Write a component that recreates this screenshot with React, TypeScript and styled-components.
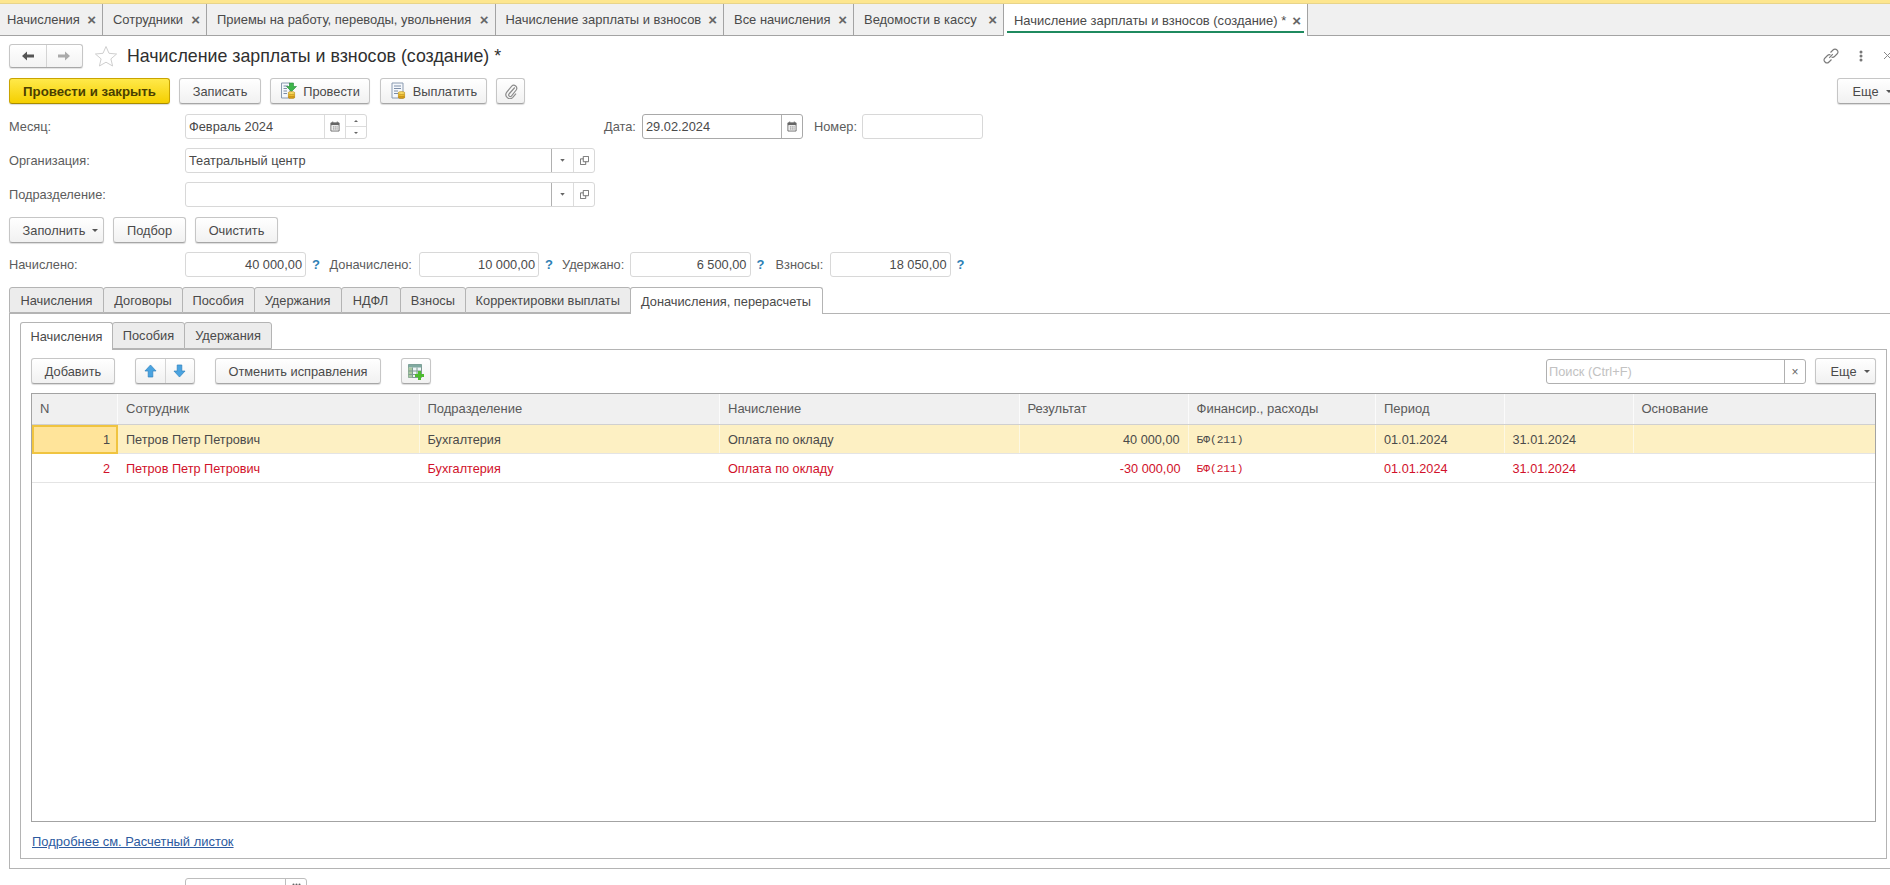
import React from "react";
import styled, { createGlobalStyle } from "styled-components";

const Global = createGlobalStyle`
  html, body { margin: 0; padding: 0; background: #fff; overflow: hidden; }
  body { font-family: "Liberation Sans", Arial, sans-serif; font-size: 12.8px; color: #4a4a4a; }
  #root { width: 1890px; height: 885px; overflow: hidden; }
`;

const Page = styled.div`
  width: 1907px;
  height: 885px;
  overflow: hidden;
  display: flex;
  flex-direction: column;
`;

const Stripe = styled.div`
  height: 4px;
  flex: none;
  background: #fde68f;
  border-bottom: 1px solid #e8d48a;
  box-sizing: border-box;
`;

const TabBar = styled.div`
  height: 32px;
  flex: none;
  box-sizing: border-box;
  display: flex;
  background: #f0f0f0;
  border-bottom: 1px solid #a3a3a3;
`;

const OpenTab = styled.div<{ $w: number; $active?: boolean; $first?: boolean }>`
  width: ${(p) => p.$w}px;
  flex: none;
  box-sizing: border-box;
  display: flex;
  align-items: center;
  justify-content: space-between;
  padding: 0 6px 0 ${(p) => (p.$first ? 7 : 10)}px;
  position: relative;
  white-space: nowrap;
  font-size: 12.95px;
  color: #4a4a4a;
  border-right: 1px solid #a3a3a3;
  background: ${(p) => (p.$active ? "#fff" : "transparent")};
  height: ${(p) => (p.$active ? "32px" : "31px")};
  ${(p) => p.$active && `
    &::after {
      content: "";
      position: absolute;
      left: 3px;
      right: 3px;
      bottom: 3px;
      height: 2px;
      background: #1f8a5f;
    }
  `}
`;

const CloseX = styled.span`
  font-size: 15px;
  font-weight: bold;
  color: #666;
  line-height: 1;
`;

const Body = styled.div`
  flex: 1;
  padding: 8px 9px 0;
  display: flex;
  flex-direction: column;
  min-height: 0;
`;

const TitleRow = styled.div`
  height: 24px;
  flex: none;
  display: flex;
  align-items: center;
`;

const NavGroup = styled.div`
  width: 74px;
  height: 24px;
  box-sizing: border-box;
  display: flex;
  border: 1px solid #c6c6c6;
  border-bottom-color: #a8a8a8;
  border-radius: 3px;
  background: linear-gradient(#fff, #f3f3f3);
  box-shadow: 0 1px 1px rgba(0, 0, 0, 0.12);
`;

const NavBtn = styled.div<{ $divider?: boolean }>`
  flex: 1;
  display: flex;
  align-items: center;
  justify-content: center;
  ${(p) => p.$divider && "border-right: 1px solid #d4d4d4;"}
`;

const StarWrap = styled.div`
  width: 24px;
  height: 22px;
  margin-left: 11px;
  flex: none;
`;

const Title = styled.div`
  margin-left: 9px;
  font-size: 17.8px;
  color: #2f2f2f;
  white-space: nowrap;
`;

const RightIcons = styled.div`
  margin-left: auto;
  display: flex;
  align-items: center;
  gap: 20px;
  margin-right: 5px;
`;

const ButtonRow = styled.div<{ $top: number }>`
  margin-top: ${(p) => p.$top}px;
  height: 26px;
  flex: none;
  display: flex;
  align-items: stretch;
`;

const Btn = styled.div<{ $w: number; $gap?: number; $primary?: boolean; $menu?: number; $push?: boolean }>`
  width: ${(p) => p.$w}px;
  margin-left: ${(p) => (p.$push ? "auto" : `${p.$gap ?? 0}px`)};
  padding-left: ${(p) => p.$menu ?? 0}px;
  flex: none;
  box-sizing: border-box;
  display: flex;
  align-items: center;
  justify-content: center;
  gap: ${(p) => (p.$menu ? 7 : 5)}px;
  white-space: nowrap;
  border-radius: 3px;
  border: 1px solid ${(p) => (p.$primary ? "#c9a400" : "#c6c6c6")};
  border-bottom-color: ${(p) => (p.$primary ? "#a88c00" : "#a6a6a6")};
  background: ${(p) =>
    p.$primary
      ? "linear-gradient(#ffe94a, #f5cf00)"
      : "linear-gradient(#ffffff, #f1f1f1)"};
  box-shadow: 0 1px 1px rgba(0, 0, 0, 0.14);
  color: ${(p) => (p.$primary ? "#4a3f00" : "#4a4a4a")};
  ${(p) => p.$primary && "font-weight: bold; font-size: 13.25px;"}
`;

const Caret = styled.span`
  width: 0;
  height: 0;
  border-left: 3px solid transparent;
  border-right: 3px solid transparent;
  border-top: 3px solid #555;
  flex: none;
`;

const FieldRow = styled.div<{ $top: number }>`
  margin-top: ${(p) => p.$top}px;
  height: 25px;
  flex: none;
  display: flex;
  align-items: center;
`;

const Label = styled.span<{ $w?: number; $gap?: number }>`
  ${(p) => (p.$w ? `width: ${p.$w}px;` : "")}
  margin-left: ${(p) => p.$gap ?? 0}px;
  flex: none;
  color: #5c5c5c;
  white-space: nowrap;
`;

const Field = styled.div<{ $w: number; $strong?: boolean }>`
  width: ${(p) => p.$w}px;
  height: 25px;
  flex: none;
  box-sizing: border-box;
  display: flex;
  align-items: stretch;
  background: #fff;
  border: 1px solid ${(p) => (p.$strong ? "#a9a9a9" : "#d8d8d8")};
  border-radius: 3px;
`;

const FieldValue = styled.div<{ $right?: boolean }>`
  flex: 1;
  min-width: 0;
  display: flex;
  align-items: center;
  justify-content: ${(p) => (p.$right ? "flex-end" : "flex-start")};
  padding: 0 3px 0 3px;
  white-space: nowrap;
  color: #4a4a4a;
`;

const FieldBtn = styled.div<{ $w: number; $dark?: boolean }>`
  width: ${(p) => p.$w}px;
  flex: none;
  box-sizing: border-box;
  display: flex;
  align-items: center;
  justify-content: center;
  border-left: 1px solid ${(p) => (p.$dark ? "#b0b0b0" : "#dcdcdc")};
`;

const SpinBtn = styled.div`
  width: 21px;
  flex: none;
  box-sizing: border-box;
  border-left: 1px solid #dcdcdc;
  display: flex;
  flex-direction: column;
`;

const SpinCell = styled.div<{ $up?: boolean }>`
  flex: 1;
  display: flex;
  align-items: center;
  justify-content: center;
  ${(p) => p.$up && "border-bottom: 1px solid #dcdcdc;"}
  &::before {
    content: "";
    width: 0;
    height: 0;
    border-left: 2px solid transparent;
    border-right: 2px solid transparent;
    ${(p) => (p.$up ? "border-bottom: 2px solid #666;" : "border-top: 2px solid #666;")}
  }
`;

const Hint = styled.span`
  margin-left: 6px;
  width: 8px;
  flex: none;
  color: #2f7fb5;
  font-weight: bold;
  font-size: 13px;
`;

const TabStrip = styled.div<{ $top?: number; $h?: number }>`
  margin-top: ${(p) => p.$top ?? 0}px;
  height: ${(p) => p.$h ?? 27}px;
  flex: none;
  display: flex;
  position: relative;
  z-index: 1;
  margin-bottom: -1px;
`;

const PageTab = styled.div<{ $w: number; $active?: boolean }>`
  width: ${(p) => p.$w}px;
  flex: none;
  box-sizing: border-box;
  display: flex;
  align-items: center;
  justify-content: center;
  white-space: nowrap;
  margin-right: -1px;
  margin-bottom: ${(p) => (p.$active ? 0 : 1)}px;
  border: 1px solid #b4b4b4;
  border-bottom: ${(p) => (p.$active ? "none" : "1px solid #b4b4b4")};
  border-radius: 3px 3px 0 0;
  background: ${(p) => (p.$active ? "#fff" : "#ececec")};
  position: relative;
  z-index: ${(p) => (p.$active ? 1 : 0)};
  color: #4a4a4a;
`;

const OuterPanel = styled.div`
  height: 556px;
  flex: none;
  box-sizing: border-box;
  border: 1px solid #b4b4b4;
  padding: 8px 10px 9px 10px;
  display: flex;
  flex-direction: column;
`;

const InnerPanel = styled.div`
  flex: 1;
  min-height: 0;
  box-sizing: border-box;
  border: 1px solid #b4b4b4;
  padding: 8px 10px 0 10px;
  display: flex;
  flex-direction: column;
`;

const TableToolbar = styled.div`
  height: 26px;
  flex: none;
  display: flex;
  align-items: stretch;
`;

const ArrowGroup = styled.div`
  width: 60px;
  margin-left: 20px;
  flex: none;
  box-sizing: border-box;
  display: flex;
  border: 1px solid #c6c6c6;
  border-bottom-color: #a6a6a6;
  border-radius: 3px;
  background: linear-gradient(#fff, #f1f1f1);
  box-shadow: 0 1px 1px rgba(0, 0, 0, 0.14);
`;

const Search = styled.div`
  margin-left: auto;
  margin-top: 1px;
  width: 260px;
  flex: none;
  box-sizing: border-box;
  display: flex;
  border: 1px solid #b0b0b0;
  border-radius: 3px;
  background: #fff;
`;

const SearchInput = styled.div`
  flex: 1;
  padding-left: 2px;
  display: flex;
  align-items: center;
  color: #c2c2c2;
`;

const SearchClear = styled.div`
  width: 21px;
  flex: none;
  box-sizing: border-box;
  border-left: 1px solid #b0b0b0;
  display: flex;
  align-items: center;
  justify-content: center;
  color: #666;
  font-size: 12px;
`;

const Table = styled.div`
  margin-top: 9px;
  height: 429px;
  flex: none;
  box-sizing: border-box;
  border: 1px solid #a3a3a3;
  display: flex;
  flex-direction: column;
`;

const grid = "86px 301.5px 300.5px 299.5px 169px 187.5px 128.5px 129px 1fr";

const HeadRow = styled.div`
  height: 31px;
  flex: none;
  box-sizing: border-box;
  display: grid;
  grid-template-columns: ${grid};
  background: #f0f0f0;
  border-bottom: 1px solid #d0d0d0;
`;

const HeadCell = styled.div<{ $last?: boolean }>`
  display: flex;
  align-items: center;
  padding-left: 8px;
  padding-bottom: 2px;
  font-size: 13px;
  color: #5a5a5a;
  white-space: nowrap;
  ${(p) => !p.$last && "border-right: 1px solid #fbfbfb;"}
`;

const DataRow = styled.div<{ $selected?: boolean; $red?: boolean }>`
  height: 29px;
  flex: none;
  box-sizing: border-box;
  display: grid;
  grid-template-columns: ${grid};
  background: ${(p) => (p.$selected ? "#fdf0c3" : "#fff")};
  color: ${(p) => (p.$red ? "#d1112a" : "#4a4a4a")};
  border-bottom: 1px solid #e4e4e4;
`;

const Cell = styled.div<{ $right?: boolean; $mono?: boolean; $current?: boolean; $selected?: boolean }>`
  display: flex;
  align-items: center;
  padding: 1px 8px 0;
  white-space: nowrap;
  font-size: 12.7px;
  justify-content: ${(p) => (p.$right ? "flex-end" : "flex-start")};
  ${(p) => p.$selected && "border-right: 1px solid #fdf8e4;"}
  ${(p) => p.$mono && `font-family: "Liberation Mono", monospace; font-size: 11.2px;`}
  ${(p) =>
    p.$current &&
    `background: #ffe49a; box-shadow: inset 0 0 0 2px #f0c440; margin-bottom: -1px;`}
`;

const TableFoot = styled.div`
  margin-top: 12px;
  flex: none;
`;

const FootLink = styled.a`
  margin-left: 1px;
  font-size: 12.95px;
  color: #2c5aa0;
  text-decoration: underline;
  cursor: pointer;
`;

const BottomField = styled.div`
  margin: 9px 0 0 176px;
  width: 122px;
  height: 25px;
  flex: none;
  box-sizing: border-box;
  display: flex;
  border: 1px solid #bdbdbd;
  border-radius: 3px;
`;

const BottomValue = styled.div`
  flex: 1;
`;

const BottomBtn = styled.div`
  width: 21px;
  box-sizing: border-box;
  border-left: 1px solid #bdbdbd;
  display: flex;
  justify-content: center;
  padding-top: 4px;
`;

/* ---------- drawings ---------- */

const ArrowLeft = ({ c }: { c: string }) => (
  <svg width="14" height="12" viewBox="0 0 14 12"><path d="M1 6 L6 1.5 V4.5 H13 V7.5 H6 V10.5 Z" fill={c} /></svg>
);
const ArrowRight = ({ c }: { c: string }) => (
  <svg width="14" height="12" viewBox="0 0 14 12"><path d="M13 6 L8 1.5 V4.5 H1 V7.5 H8 V10.5 Z" fill={c} /></svg>
);
const Star = () => (
  <svg width="24" height="22" viewBox="0 0 24 22">
    <path d="M12 1.5 L15 8.3 L22.6 9 L16.9 13.9 L18.6 21 L12 17.2 L5.4 21 L7.1 13.9 L1.4 9 L9 8.3 Z" fill="#fff" stroke="#cfcfcf" strokeWidth="1" />
  </svg>
);
const LinkIcon = () => (
  <svg width="16" height="16" viewBox="0 0 16 16" fill="none" stroke="#7a7a7a" strokeWidth="1.1">
    <path d="M6.2 9.8 L9.8 6.2" />
    <path d="M7.5 4.5 L10 2 a2.8 2.8 0 0 1 4 4 L11.5 8.5 a2.8 2.8 0 0 1 -3 .6" />
    <path d="M8.5 11.5 L6 14 a2.8 2.8 0 0 1 -4 -4 L4.5 7.5 a2.8 2.8 0 0 1 3 -.6" />
  </svg>
);
const Dots = () => (
  <svg width="4" height="12" viewBox="0 0 4 12"><circle cx="2" cy="2" r="1.5" fill="#777" /><circle cx="2" cy="6" r="1.5" fill="#777" /><circle cx="2" cy="10" r="1.5" fill="#777" /></svg>
);
const Cross = () => (
  <svg width="10" height="10" viewBox="0 0 10 10" stroke="#888" strokeWidth="1"><path d="M1 1 L8 8 M8 1 L1 8" /></svg>
);
const Coins = () => (
  <>
    <ellipse cx="11.5" cy="15" rx="3.5" ry="1.5" fill="#d89c18" stroke="#a87a10" strokeWidth=".5" />
    <ellipse cx="11.5" cy="13" rx="3.5" ry="1.5" fill="#f0bf30" stroke="#a87a10" strokeWidth=".5" />
    <ellipse cx="11.5" cy="11" rx="3.5" ry="1.5" fill="#f8d860" stroke="#a87a10" strokeWidth=".5" />
  </>
);
const PostIcon = () => (
  <svg width="18" height="18" viewBox="0 0 18 18">
    <path d="M1.5 1 H10 V16 H1.5 Z" fill="#f5f8fc" stroke="#8a9ab0" />
    <path d="M3.5 4 H8 M3.5 6.5 H7 M3.5 9 H7 M3.5 11.5 H7" stroke="#7d8ea8" />
    <path d="M9.5 1 H13.5 V4.5 H16.5 L11.5 9.5 L6.5 4.5 H9.5 Z" fill="#3db54a" stroke="#23863a" strokeWidth=".6" />
    <Coins />
  </svg>
);
const PayIcon = () => (
  <svg width="18" height="18" viewBox="0 0 18 18">
    <path d="M2 1 H13 V16 H2 Z" fill="#f5f8fc" stroke="#8a9ab0" />
    <path d="M4 4 H11 M4 6.5 H11 M4 9 H8 M4 11.5 H8" stroke="#7d8ea8" />
    <Coins />
  </svg>
);
const Clip = () => (
  <svg width="14" height="16" viewBox="0 0 14 16" fill="none" stroke="#8c8c8c" strokeWidth="1.2">
    <path d="M10.8 4.5 L5 11 a1.6 1.6 0 0 0 2.4 2.1 L12.2 7 a3 3 0 0 0 -4.5 -3.9 L2.6 9.4 a4 4 0 0 0 6 5.2 L12 10.6" />
  </svg>
);
const Calendar = () => (
  <svg width="10" height="11" viewBox="0 0 11 12">
    <path d="M1 2 H10 V11 H1 Z" fill="#fff" stroke="#666" />
    <path d="M1 2 H10 V4.5 H1 Z" fill="#666" />
    <path d="M3 0.5 V3 M8 0.5 V3" stroke="#666" />
    <path d="M3 6.5 H4.5 M5 6.5 H6.5 M7 6.5 H8.5 M3 8.7 H4.5 M5 8.7 H6.5 M7 8.7 H8.5" stroke="#666" />
  </svg>
);
const Open = () => (
  <svg width="9" height="9" viewBox="0 0 11 11" fill="#fff" stroke="#666" strokeWidth="1.1">
    <path d="M4 .5 H10.5 V7 H4 Z" />
    <path d="M4 3.5 H.5 V10.5 H7 V7" fill="none" />
  </svg>
);
const Drop = () => (
  <svg width="5" height="3" viewBox="0 0 6 4"><path d="M0 0 H6 L3 3.5 Z" fill="#666" /></svg>
);
const BlueArrow = ({ up }: { up?: boolean }) => (
  <svg width="13" height="14" viewBox="0 0 14 15" style={up ? undefined : { transform: "rotate(180deg)" }}>
    <path d="M7 1 L13 7.5 H9.5 V14 H4.5 V7.5 H1 Z" fill="#4aa3e0" stroke="#2b7fbb" strokeWidth=".7" />
  </svg>
);
const TableAdd = () => (
  <svg width="18" height="17" viewBox="0 0 18 17">
    <path d="M1.5 1.5 H14.5 V14.5 H1.5 Z" fill="#eef4f6" stroke="#7d9a90" />
    <path d="M1.5 1.5 H14.5 V4.5 H1.5 Z" fill="#7fa9a0" />
    <path d="M1.5 4.5 H5.5 V14.5 H1.5 Z" fill="#a9c8a0" />
    <path d="M5.5 4.5 V14.5 M10 4.5 V14.5 M1.5 8 H14.5 M1.5 11.5 H14.5" stroke="#7d9a90" />
    <path d="M11 8 H14 V11 H17 V14 H14 V17 H11 V14 H8 V11 H11 Z" fill="#4dbb2f" />
  </svg>
);
const BottomDots = () => (
  <svg width="9" height="3" viewBox="0 0 9 3"><circle cx="1.5" cy="1.5" r="1" fill="#666" /><circle cx="4.5" cy="1.5" r="1" fill="#666" /><circle cx="7.5" cy="1.5" r="1" fill="#666" /></svg>
);

/* ---------- data ---------- */

const openTabs = [
  { t: "Начисления", w: 103, first: true },
  { t: "Сотрудники", w: 104 },
  { t: "Приемы на работу, переводы, увольнения", w: 288.5 },
  { t: "Начисление зарплаты и взносов", w: 228.5 },
  { t: "Все начисления", w: 130 },
  { t: "Ведомости в кассу", w: 150 },
  { t: "Начисление зарплаты и взносов (создание) *", w: 304, active: true },
];

const outerTabs = [
  { t: "Начисления", w: 95 },
  { t: "Договоры", w: 80 },
  { t: "Пособия", w: 72.5 },
  { t: "Удержания", w: 88 },
  { t: "НДФЛ", w: 60 },
  { t: "Взносы", w: 66.5 },
  { t: "Корректировки выплаты", w: 165.5 },
  { t: "Доначисления, перерасчеты", w: 193, active: true },
];

const innerTabs = [
  { t: "Начисления", w: 93, active: true },
  { t: "Пособия", w: 73 },
  { t: "Удержания", w: 88 },
];

const columns = ["N", "Сотрудник", "Подразделение", "Начисление", "Результат", "Финансир., расходы", "Период", "", "Основание"];

const rows = [
  { n: "1", sum: "40 000,00", selected: true, red: false },
  { n: "2", sum: "-30 000,00", selected: false, red: true },
];

export default function App() {
  return (
    <>
      <Global />
      <Page>
        <Stripe />
        <TabBar>
          {openTabs.map((t) => (
            <OpenTab key={t.t} $w={t.w} $active={t.active} $first={t.first}>
              {t.t}
              <CloseX>×</CloseX>
            </OpenTab>
          ))}
        </TabBar>
        <Body>
          <TitleRow>
            <NavGroup>
              <NavBtn $divider><ArrowLeft c="#555" /></NavBtn>
              <NavBtn><ArrowRight c="#aaa" /></NavBtn>
            </NavGroup>
            <StarWrap><Star /></StarWrap>
            <Title>Начисление зарплаты и взносов (создание) *</Title>
            <RightIcons>
              <LinkIcon />
              <Dots />
              <Cross />
            </RightIcons>
          </TitleRow>

          <ButtonRow $top={10}>
            <Btn $w={161} $primary>Провести и закрыть</Btn>
            <Btn $w={82} $gap={9}>Записать</Btn>
            <Btn $w={100} $gap={9}><PostIcon />Провести</Btn>
            <Btn $w={107} $gap={10}><PayIcon />Выплатить</Btn>
            <Btn $w={29} $gap={9}><Clip /></Btn>
            <Btn $w={61} $push $menu={9}>Еще <Caret /></Btn>
          </ButtonRow>

          <FieldRow $top={10}>
            <Label $w={176}>Месяц:</Label>
            <Field $w={182}>
              <FieldValue>Февраль 2024</FieldValue>
              <FieldBtn $w={21}><Calendar /></FieldBtn>
              <SpinBtn><SpinCell $up /><SpinCell /></SpinBtn>
            </Field>
            <Label $gap={237} $w={38}>Дата:</Label>
            <Field $w={161} $strong>
              <FieldValue>29.02.2024</FieldValue>
              <FieldBtn $w={21} $dark><Calendar /></FieldBtn>
            </Field>
            <Label $gap={11} $w={48}>Номер:</Label>
            <Field $w={121} />
          </FieldRow>

          <FieldRow $top={9}>
            <Label $w={176}>Организация:</Label>
            <Field $w={410}>
              <FieldValue>Театральный центр</FieldValue>
              <FieldBtn $w={22} $dark><Drop /></FieldBtn>
              <FieldBtn $w={21}><Open /></FieldBtn>
            </Field>
          </FieldRow>

          <FieldRow $top={9}>
            <Label $w={176}>Подразделение:</Label>
            <Field $w={410}>
              <FieldValue />
              <FieldBtn $w={22} $dark><Drop /></FieldBtn>
              <FieldBtn $w={21}><Open /></FieldBtn>
            </Field>
          </FieldRow>

          <ButtonRow $top={10}>
            <Btn $w={95} $menu={8}>Заполнить <Caret /></Btn>
            <Btn $w={73} $gap={9}>Подбор</Btn>
            <Btn $w={83} $gap={9}>Очистить</Btn>
          </ButtonRow>

          <FieldRow $top={9}>
            <Label $w={176}>Начислено:</Label>
            <Field $w={121}><FieldValue $right>40 000,00</FieldValue></Field>
            <Hint>?</Hint>
            <Label $gap={9.5} $w={89.5}>Доначислено:</Label>
            <Field $w={120}><FieldValue $right>10 000,00</FieldValue></Field>
            <Hint>?</Hint>
            <Label $gap={9} $w={68}>Удержано:</Label>
            <Field $w={120.5}><FieldValue $right>6 500,00</FieldValue></Field>
            <Hint>?</Hint>
            <Label $gap={11} $w={54}>Взносы:</Label>
            <Field $w={121}><FieldValue $right>18 050,00</FieldValue></Field>
            <Hint>?</Hint>
          </FieldRow>

          <TabStrip $top={10}>
            {outerTabs.map((t) => (
              <PageTab key={t.t} $w={t.w} $active={t.active}>{t.t}</PageTab>
            ))}
          </TabStrip>
          <OuterPanel>
            <TabStrip $h={28}>
              {innerTabs.map((t) => (
                <PageTab key={t.t} $w={t.w} $active={t.active}>{t.t}</PageTab>
              ))}
            </TabStrip>
            <InnerPanel>
              <TableToolbar>
                <Btn $w={84}>Добавить</Btn>
                <ArrowGroup>
                  <NavBtn $divider><BlueArrow up /></NavBtn>
                  <NavBtn><BlueArrow /></NavBtn>
                </ArrowGroup>
                <Btn $w={166} $gap={20}>Отменить исправления</Btn>
                <Btn $w={30} $gap={20}><TableAdd /></Btn>
                <Search>
                  <SearchInput>Поиск (Ctrl+F)</SearchInput>
                  <SearchClear>×</SearchClear>
                </Search>
                <Btn $w={61} $gap={9} $menu={9}>Еще <Caret /></Btn>
              </TableToolbar>
              <Table>
                <HeadRow>
                  {columns.map((c, i) => (
                    <HeadCell key={i} $last={i === columns.length - 1}>{c}</HeadCell>
                  ))}
                </HeadRow>
                {rows.map((r) => (
                  <DataRow key={r.n} $selected={r.selected} $red={r.red}>
                    <Cell $right $current={r.selected}>{r.n}</Cell>
                    <Cell $selected={r.selected}>Петров Петр Петрович</Cell>
                    <Cell $selected={r.selected}>Бухгалтерия</Cell>
                    <Cell $selected={r.selected}>Оплата по окладу</Cell>
                    <Cell $right $selected={r.selected}>{r.sum}</Cell>
                    <Cell $mono $selected={r.selected}>БФ(211)</Cell>
                    <Cell $selected={r.selected}>01.01.2024</Cell>
                    <Cell $selected={r.selected}>31.01.2024</Cell>
                    <Cell />
                  </DataRow>
                ))}
              </Table>
              <TableFoot>
                <FootLink>Подробнее см. Расчетный листок</FootLink>
              </TableFoot>
            </InnerPanel>
          </OuterPanel>
          <BottomField>
            <BottomValue />
            <BottomBtn><BottomDots /></BottomBtn>
          </BottomField>
        </Body>
      </Page>
    </>
  );
}
